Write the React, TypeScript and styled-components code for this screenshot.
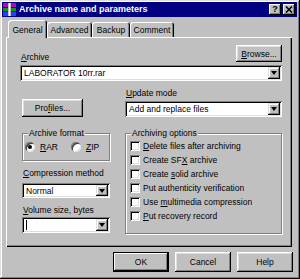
import styled, { createGlobalStyle } from "styled-components";

const GlobalStyle = createGlobalStyle`
  html, body {
    margin: 0;
    padding: 0;
    background: #c0c0c0;
  }
  body {
    font-family: "Liberation Sans", Arial, sans-serif;
    font-size: 8.5px;
    color: #000;
  }
  * {
    box-sizing: border-box;
  }
`;

const raised = `
  box-shadow: inset -1px -1px #000, inset 1px 1px #fff,
    inset -2px -2px #808080, inset 2px 2px #dfdfdf;
`;

const sunken = `
  box-shadow: inset 1px 1px #808080, inset -1px -1px #fff,
    inset 2px 2px #000, inset -2px -2px #dfdfdf;
`;

const Window = styled.div`
  width: 300px;
  height: 279px;
  background: #c0c0c0;
  padding: 2px 3px 2px 2px;
  display: flex;
  flex-direction: column;
  box-shadow: inset -1px -1px #000, inset 1px 1px #dfdfdf,
    inset -2px -2px #808080, inset 2px 2px #fff;
`;

const TitleBar = styled.div`
  height: 15px;
  background: #000080;
  display: flex;
  align-items: center;
  gap: 3px;
  padding: 0 2px 0 1px;
`;

const TitleText = styled.div`
  flex: 1;
  color: #fff;
  font-weight: bold;
  font-size: 9px;
  line-height: 15px;
`;

const TitleButtons = styled.div`
  display: flex;
  gap: 2px;
`;

const TitleButton = styled.div`
  width: 12px;
  height: 11px;
  background: #c0c0c0;
  display: flex;
  align-items: center;
  justify-content: center;
  font-weight: bold;
  font-size: 9px;
  line-height: 11px;
  box-shadow: inset -1px -1px #000, inset 1px 1px #fff, inset -2px -2px #808080;
`;

const TabRow = styled.div`
  display: flex;
  align-items: flex-end;
  height: 18px;
  margin-top: 3px;
  margin-bottom: -1px;
  padding-left: 6px;
  position: relative;
  z-index: 1;
`;

const Tab = styled.div<{ $w: number; $active?: boolean }>`
  width: ${(p) => p.$w}px;
  height: ${(p) => (p.$active ? 18 : 15)}px;
  margin-bottom: ${(p) => (p.$active ? 0 : 1)}px;
  padding-top: ${(p) => (p.$active ? 5 : 3)}px;
  display: flex;
  justify-content: center;
  line-height: 10px;
  background: #c0c0c0;
  border-radius: 3px 3px 0 0;
  box-shadow: inset 1px 1px #fff, inset -1px 0 #000, inset -2px 0 #808080;
`;

const Panel = styled.div`
  height: 210px;
  margin: 0 5px 0 4px;
  padding: 8px 10px 0 14px;
  box-shadow: inset 1px 1px #fff, inset -1px -1px #000, inset -2px -2px #808080;
`;

const TopRow = styled.div`
  display: flex;
  justify-content: space-between;
  align-items: flex-end;
  height: 17px;
`;

const Label = styled.div<{ $top?: number }>`
  line-height: 10px;
  padding-left: 1px;
  margin-top: ${(p) => p.$top ?? 0}px;
`;

const Button = styled.div<{ $w: number; $h: number; $top?: number; $default?: boolean }>`
  width: ${(p) => p.$w}px;
  height: ${(p) => p.$h}px;
  margin-top: ${(p) => p.$top ?? 0}px;
  background: #c0c0c0;
  display: flex;
  align-items: center;
  justify-content: center;
  ${raised}
  ${(p) =>
    p.$default &&
    `box-shadow: inset 0 0 0 1px #000, inset -2px -2px #000, inset 2px 2px #fff, inset -3px -3px #808080;`}
`;

const Combo = styled.div<{ $h: number; $top: number }>`
  height: ${(p) => p.$h}px;
  margin-top: ${(p) => p.$top}px;
  background: #fff;
  display: flex;
  align-items: center;
  padding: 2px;
  ${sunken}
`;

const ComboText = styled.div`
  flex: 1;
  padding-left: 2px;
  white-space: nowrap;
  overflow: hidden;
`;

const Caret = styled.div`
  width: 1px;
  height: 10px;
  margin-left: 2px;
  background: #000;
`;

const ArrowButton = styled.div`
  width: 12px;
  align-self: stretch;
  background: #c0c0c0;
  display: flex;
  align-items: center;
  justify-content: center;
  box-shadow: inset -1px -1px #000, inset 1px 1px #dfdfdf, inset -2px -2px #808080, inset 2px 2px #fff;

  &::after {
    content: "";
    border-left: 3px solid transparent;
    border-right: 3px solid transparent;
    border-top: 4px solid #000;
  }
`;

const Columns = styled.div`
  display: grid;
  grid-template-columns: 88px 157px;
  column-gap: 15px;
  margin-top: 7px;
  padding-left: 2px;
`;

const Column = styled.div`
  display: flex;
  flex-direction: column;
`;

const Group = styled.div<{ $h: number; $top: number }>`
  height: ${(p) => p.$h}px;
  margin-top: ${(p) => p.$top}px;
  border: 1px solid #808080;
  box-shadow: inset 1px 1px #fff, 1px 1px #fff;
  padding: 0 4px 0 2px;
`;

const Legend = styled.div<{ $left: number }>`
  width: fit-content;
  margin: -6px 0 0 ${(p) => p.$left}px;
  padding: 0 1px;
  line-height: 10px;
  background: #c0c0c0;
`;

const RadioRow = styled.div`
  display: flex;
  align-items: center;
  gap: 13px;
  height: 12px;
  margin-top: 3px;
`;

const Choice = styled.div`
  display: flex;
  align-items: center;
  gap: 5px;
`;

const Radio = styled.div<{ $checked?: boolean }>`
  width: 10px;
  height: 10px;
  border-radius: 50%;
  background: #fff;
  display: flex;
  align-items: center;
  justify-content: center;
  box-shadow: inset 1px 1px #808080, inset -1px -1px #dfdfdf, inset 2px 2px #404040;

  &::after {
    content: "";
    width: 4px;
    height: 4px;
    border-radius: 50%;
    background: ${(p) => (p.$checked ? "#000" : "transparent")};
  }
`;

const CheckList = styled.div`
  display: flex;
  flex-direction: column;
  margin-top: 1px;
  padding-left: 2px;
`;

const CheckRow = styled.div`
  display: flex;
  align-items: center;
  gap: 3px;
  height: 14px;
  white-space: nowrap;
`;

const Checkbox = styled.div`
  width: 10px;
  height: 10px;
  background: #fff;
  ${sunken}
`;

const ButtonRow = styled.div`
  display: flex;
  justify-content: flex-end;
  gap: 6px;
  margin-top: 5px;
  padding-right: 4px;
`;

const AppIcon = () => (
  <svg width="13" height="13" viewBox="0 0 13 13">
    <rect x="0" y="0" width="13" height="4" fill="#c000c0" />
    <rect x="0" y="4" width="13" height="1" fill="#400040" />
    <rect x="0" y="5" width="13" height="3" fill="#00a000" />
    <rect x="0" y="8" width="13" height="1" fill="#004000" />
    <rect x="0" y="9" width="13" height="4" fill="#2040ff" />
    <rect x="5" y="0" width="3" height="13" fill="#c0c0c0" />
    <rect x="6" y="0" width="1" height="13" fill="#ffffff" />
  </svg>
);

const CloseGlyph = () => (
  <svg width="8" height="7" viewBox="0 0 8 7">
    <path d="M1 0.5 L7 6.5 M7 0.5 L1 6.5" stroke="#000" strokeWidth="1.6" />
  </svg>
);

const options: [string, string, string][] = [
  ["", "D", "elete files after archiving"],
  ["Create SF", "X", " archive"],
  ["Create ", "s", "olid archive"],
  ["Put authenticity verification", "", ""],
  ["Use ", "m", "ultimedia compression"],
  ["", "P", "ut recovery record"],
];

export default function App() {
  return (
    <>
      <GlobalStyle />
      <Window>
        <TitleBar>
          <AppIcon />
          <TitleText>Archive name and parameters</TitleText>
          <TitleButtons>
            <TitleButton>?</TitleButton>
            <TitleButton>
              <CloseGlyph />
            </TitleButton>
          </TitleButtons>
        </TitleBar>

        <TabRow>
          <Tab $w={39} $active>
            General
          </Tab>
          <Tab $w={45}>Advanced</Tab>
          <Tab $w={38}>Backup</Tab>
          <Tab $w={44}>Comment</Tab>
        </TabRow>

        <Panel>
          <TopRow>
            <Label>
              <u>A</u>rchive
            </Label>
            <Button $w={46} $h={17}>
              <span>
                <u>B</u>rowse...
              </span>
            </Button>
          </TopRow>
          <Combo $h={16} $top={3}>
            <ComboText>LABORATOR 10rr.rar</ComboText>
            <ArrowButton />
          </Combo>

          <Columns>
            <Column>
              <Button $w={61} $h={18} $top={11}>
                <span>
                  Pro<u>f</u>iles...
                </span>
              </Button>
              <Group $h={28} $top={16}>
                <Legend $left={3}>Archive format</Legend>
                <RadioRow>
                  <Choice>
                    <Radio $checked />
                    <span>
                      <u>R</u>AR
                    </span>
                  </Choice>
                  <Choice>
                    <Radio />
                    <span>
                      <u>Z</u>IP
                    </span>
                  </Choice>
                </RadioRow>
              </Group>
              <Label $top={7}>
                <u>C</u>ompression method
              </Label>
              <Combo $h={15} $top={5}>
                <ComboText>Normal</ComboText>
                <ArrowButton />
              </Combo>
              <Label $top={7}>
                <u>V</u>olume size, bytes
              </Label>
              <Combo $h={16} $top={2}>
                <Caret />
                <ComboText />
                <ArrowButton />
              </Combo>
            </Column>

            <Column>
              <Label>
                <u>U</u>pdate mode
              </Label>
              <Combo $h={16} $top={3}>
                <ComboText>Add and replace files</ComboText>
                <ArrowButton />
              </Combo>
              <Group $h={101} $top={16}>
                <Legend $left={3}>Archiving options</Legend>
                <CheckList>
                  {options.map(([pre, key, post]) => (
                    <CheckRow key={pre + key + post}>
                      <Checkbox />
                      <span>
                        {pre}
                        {key && <u>{key}</u>}
                        {post}
                      </span>
                    </CheckRow>
                  ))}
                </CheckList>
              </Group>
            </Column>
          </Columns>
        </Panel>

        <ButtonRow>
          <Button $w={56} $h={20} $default>
            OK
          </Button>
          <Button $w={56} $h={20}>
            Cancel
          </Button>
          <Button $w={56} $h={20}>
            Help
          </Button>
        </ButtonRow>
      </Window>
    </>
  );
}
